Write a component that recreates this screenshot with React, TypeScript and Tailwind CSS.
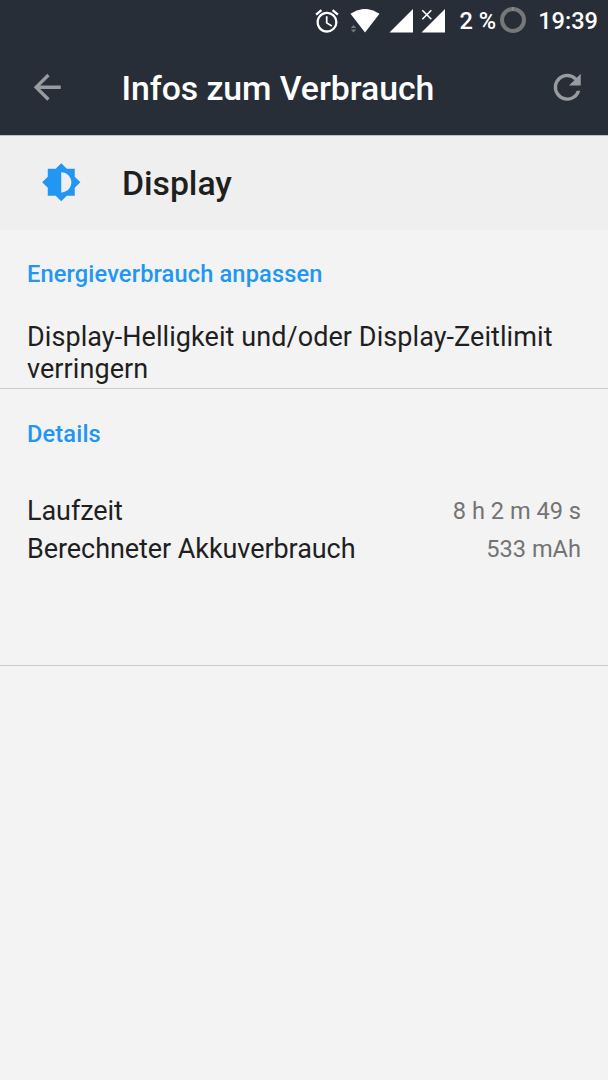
import type { ReactNode } from "react";

interface DetailRow {
  label: string;
  value: string;
}

const details: DetailRow[] = [
  { label: "Laufzeit", value: "8 h 2 m 49 s" },
  { label: "Berechneter Akkuverbrauch", value: "533 mAh" },
];

function Icon({ d, className }: { d: string; className?: string }) {
  return (
    <svg viewBox="0 0 24 24" fill="currentColor" className={`h-[40.5px] w-[40.5px] shrink-0 ${className ?? ""}`}>
      <path d={d} />
    </svg>
  );
}

function StatusBar() {
  return (
    <div className="flex h-[41px] items-center justify-end pr-[10px] text-[23.6px] leading-none font-medium text-white">
      {/* Alarm */}
      <svg viewBox="0 0 24 24" fill="currentColor" className="h-[28px] w-[28px]">
        <path d="M22 5.72l-4.6-3.86-1.29 1.53 4.6 3.86L22 5.72zM7.88 3.39L6.6 1.86 2 5.71l1.29 1.53 4.59-3.85zM12.5 8H11v6l4.75 2.85.75-1.23-4-2.37V8zM12 4c-4.97 0-9 4.03-9 9s4.02 9 9 9a9 9 0 0 0 0-18zm0 16c-3.87 0-7-3.13-7-7s3.13-7 7-7 7 3.13 7 7-3.13 7-7 7z" />
      </svg>
      {/* Wi-Fi with traffic arrows */}
      <svg viewBox="0 0 30 24" className="ml-[9px] h-[24px] w-[30px]">
        <path d="M.5 4.8Q15-5 29.5 4.8L15 23.5Z" fill="#fff" />
        <path d="M.8 19h5.4L3.5 16zM.8 20.4h5.4L3.5 23.4z" fill="#777b80" />
      </svg>
      {/* Signal, SIM 1 */}
      <svg viewBox="0 0 24 24" className="ml-[9px] h-[24px] w-[24px]">
        <path d="M24 0v23.5H.5z" fill="#fff" />
      </svg>
      {/* Signal, SIM 2, no data */}
      <svg viewBox="0 0 24 24" className="ml-[8px] h-[24px] w-[24px]">
        <path d="M24 0v23.5H.5z" fill="#fff" />
        <path d="M1.3 1.2l9 9M10.3 1.2l-9 9" stroke="#fff" strokeWidth="1.6" />
      </svg>
      <span className="mt-[2px] ml-[14px] whitespace-nowrap">2 %</span>
      <svg viewBox="0 0 26 26" fill="none" className="mb-px ml-[4px] h-[26px] w-[26px]">
        <circle cx="13" cy="13" r="11" stroke="#757778" strokeWidth="4" />
        <path d="M12.3 2a11 11 0 0 1 1.4 0" stroke="#8f9193" strokeWidth="4" />
      </svg>
      <span className="mt-[2px] ml-[12px]">19:39</span>
    </div>
  );
}

function Heading({ children }: { children: ReactNode }) {
  return <h2 className="text-[23.6px] leading-[28px] font-medium tracking-[0.15px] text-[#2196f3]">{children}</h2>;
}

export default function App() {
  return (
    <div className="flex h-[1080px] w-[608px] flex-col bg-[#f3f3f3] font-[Roboto,sans-serif] text-[27px] leading-[32px] text-[#1f1f1f]">
      <header className="h-[135px] shrink-0 bg-[#272e38]">
        <StatusBar />
        <div className="flex h-[94px] items-center px-[27px]">
          <Icon
            d="M20 11H7.83l5.59-5.59L12 4l-8 8 8 8 1.41-1.41L7.83 13H20v-2z"
            className="mb-px text-[#989b9f]"
          />
          <h1 className="mt-[2px] ml-[54px] flex-1 text-[33.8px] leading-[40px] font-medium tracking-[-0.06px] text-white">
            Infos zum Verbrauch
          </h1>
          <Icon
            d="M17.65 6.35A7.96 7.96 0 0 0 12 4a8 8 0 1 0 7.73 10h-2.08A6 6 0 1 1 12 6c1.66 0 3.14.69 4.22 1.78L13 11h7V4l-2.35 2.35z"
            className="mb-px -mr-[6.5px] text-[#989b9f]"
          />
        </div>
      </header>

      <div className="flex h-[95px] shrink-0 items-center border-t border-[#bfbfc0] bg-[#efefef] pl-[40.5px]">
        <Icon
          d="M20 15.31L23.31 12 20 8.69V4h-4.69L12 .69 8.69 4H4v4.69L.69 12 4 15.31V20h4.69L12 23.31 15.31 20H20v-4.69zM12 18V6c3.31 0 6 2.69 6 6s-2.69 6-6 6z"
          className="mb-px text-[#2196f3]"
        />
        <span className="mt-[2px] ml-[41px] text-[33.8px] leading-[40px] font-medium tracking-[-0.06px]">Display</span>
      </div>

      <section className="h-[159px] shrink-0 border-b border-[#cacaca] px-[27px] pt-[30px]">
        <Heading>Energieverbrauch anpassen</Heading>
        <p className="mt-[33px] tracking-[0.07px]">Display-Helligkeit und/oder Display-Zeitlimit verringern</p>
      </section>

      <section className="h-[277px] shrink-0 border-b border-[#cacaca] px-[27px] pt-[31px]">
        <Heading>Details</Heading>
        <div className="mt-[43px]">
          {details.map((row) => (
            <div key={row.label} className="flex h-[38px] items-center justify-between">
              <span className="mt-px tracking-[-0.07px]">{row.label}</span>
              <span className="mt-[2px] text-[23.6px] text-[#737373]">{row.value}</span>
            </div>
          ))}
        </div>
      </section>
    </div>
  );
}
